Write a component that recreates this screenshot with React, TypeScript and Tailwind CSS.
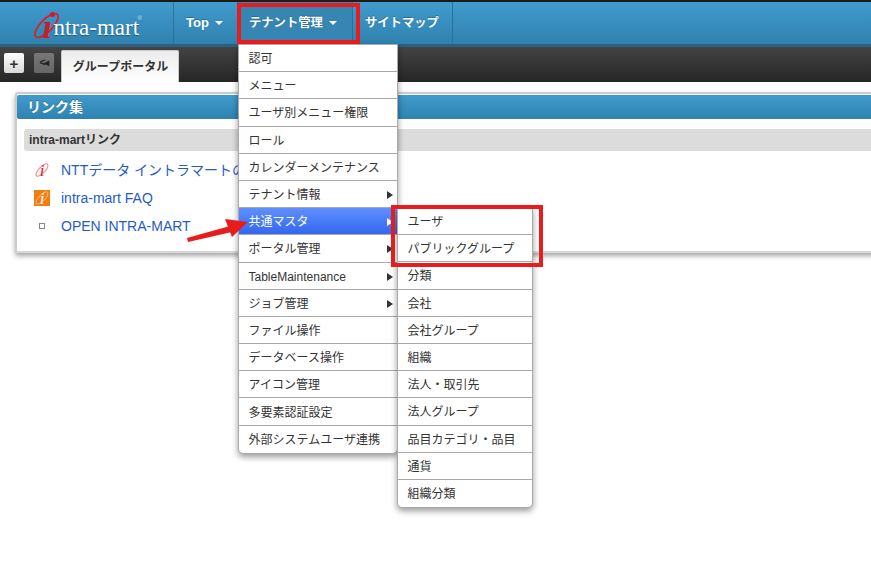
const jp = "font-['Liberation_Sans','Noto_Sans_CJK_JP',sans-serif]";

const mainMenu: { label: string; sub?: boolean; active?: boolean }[] = [
  { label: "認可" },
  { label: "メニュー" },
  { label: "ユーザ別メニュー権限" },
  { label: "ロール" },
  { label: "カレンダーメンテナンス" },
  { label: "テナント情報", sub: true },
  { label: "共通マスタ", sub: true, active: true },
  { label: "ポータル管理", sub: true },
  { label: "TableMaintenance", sub: true },
  { label: "ジョブ管理", sub: true },
  { label: "ファイル操作" },
  { label: "データベース操作" },
  { label: "アイコン管理" },
  { label: "多要素認証設定" },
  { label: "外部システムユーザ連携" },
];

const subMenu = [
  "ユーザ",
  "パブリックグループ",
  "分類",
  "会社",
  "会社グループ",
  "組織",
  "法人・取引先",
  "法人グループ",
  "品目カテゴリ・品目",
  "通貨",
  "組織分類",
];

const Caret = () => (
  <span className="ml-[6px] inline-block h-0 w-0 border-x-[4px] border-t-[4px] border-x-transparent border-t-white" />
);

const Swoosh = ({ className, color = "#d7202a", width = 2 }: { className: string; color?: string; width?: number }) => (
  <svg viewBox="0 0 36 36" className={className} fill="none">
    <ellipse cx="18" cy="18" rx="18" ry="7" transform="rotate(-46 18 18)" stroke={color} strokeWidth={width} />
  </svg>
);

const Logo = () => (
  <div className="flex w-[173px] shrink-0 items-center justify-center pr-[2px]">
    <div className="relative h-[36px] w-[112px]">
      <Swoosh className="absolute left-[1px] top-[5px] h-[31px] w-[31px]" />
      <span className="absolute left-[20px] top-[7px] h-[5px] w-[5px] rounded-full bg-[#c81e28]" />
      <span className="absolute left-[13px] top-[6px] font-['Liberation_Serif',serif] text-[34px] font-bold italic leading-[32px] text-[#c81e28]">
        ı
      </span>
      <span className="absolute left-[24px] top-[9px] font-['Liberation_Serif',serif] text-[23px] leading-[27px] text-white [text-shadow:0_1px_1px_#1c5a80]">
        ntra-mart
      </span>
      <span className="absolute left-[108px] top-[9px] text-[6px] leading-[8px] text-[#cfe3ef]">®</span>
    </div>
  </div>
);

const NavItem = ({ label, caret, className }: { label: string; caret?: boolean; className: string }) => (
  <div
    className={`flex h-full shrink-0 items-center border-l border-[#2a7099] font-bold text-white [text-shadow:0_-1px_0_#2b6d93] ${className}`}
  >
    {label}
    {caret && <Caret />}
  </div>
);

const Header = () => (
  <header className="border-t-2 border-[#1c1c1c]">
    <div className="flex h-[42px] bg-gradient-to-b from-[#409bcd] to-[#2f82af]">
      <Logo />
      <NavItem label="Top" caret className="w-[64px] pl-[12px] text-[13px]" />
      <NavItem label="テナント管理" caret className="w-[115px] bg-[#3685b2] pl-[11px] text-[12.3px]" />
      <NavItem label="サイトマップ" className="w-[100px] pl-[12px] text-[12.3px]" />
      <div className="h-full border-l border-[#2a7099]" />
    </div>
    <div className="h-[3px] bg-[#2d6080]" />
    <div className="flex h-[35px] bg-gradient-to-b from-[#444444] to-[#262626] pl-[4px] pt-[3px]">
      <button className="mt-[3px] flex h-[20px] w-[20px] items-center justify-center rounded-[2px] bg-gradient-to-b from-white to-[#d8d8d8] text-[15px] font-bold leading-none text-[#333]">
        +
      </button>
      <button className="ml-[10px] mt-[3px] flex h-[20px] w-[20px] items-center justify-center rounded-[2px] bg-gradient-to-b from-[#777777] to-[#666666] text-[10px] font-bold leading-none tracking-[-1px] text-[#222]">
        &lt;◂
      </button>
      <div className="ml-[7px] flex h-[32px] w-[118px] items-center justify-center rounded-t-[2px] border border-b-0 border-[#cccccc] bg-gradient-to-b from-[#ececec] to-white pl-[1px] text-[12px] font-bold text-[#333]">
        グループポータル
      </div>
    </div>
  </header>
);

const LinkRow = ({ icon, label }: { icon: React.ReactNode; label: string }) => (
  <div className="flex h-[28px] items-center">
    <div className="flex w-[34px] shrink-0 justify-center">{icon}</div>
    <a className="ml-[2px] whitespace-nowrap text-[14px] text-[#1f5bc9]">{label}</a>
  </div>
);

const Portlet = () => (
  <section className="-mr-[20px] ml-[15px] mt-[10px] h-[161px] rounded-[3px] border-2 border-[#cccccc] border-b-[#d8d8d8] bg-white pt-[1px] shadow-[0_3px_5px_rgba(0,0,0,0.35)]">
    <h2 className="flex h-[24px] items-center rounded-l-[2px] bg-gradient-to-b from-[#409bcd] to-[#2f82af] pl-[10px] text-[14px] font-bold text-white [text-shadow:0_-1px_0_#2b6d93]">
      リンク集
    </h2>
    <div className="pl-[7px] pt-[10px]">
      <h3 className="flex h-[22px] items-center rounded-l-[3px] bg-[#dcdcdc] pl-[5px] text-[12px] font-bold text-[#333]">
        intra-martリンク
      </h3>
      <div className="ml-[1px] pt-[5px]">
        <LinkRow
          label="NTTデータ イントラマートの"
          icon={
            <span className="relative flex h-[16px] w-[16px] items-center justify-center">
              <Swoosh className="absolute inset-0 h-[16px] w-[16px] opacity-50" width={2.4} />
              <span className="font-['Liberation_Serif',serif] text-[17px] italic leading-none text-[#d7202a]">i</span>
            </span>
          }
        />
        <LinkRow
          label="intra-mart FAQ"
          icon={
            <span className="relative flex h-[16px] w-[16px] items-center justify-center bg-[#f47d12]">
              <Swoosh className="absolute inset-0 h-[16px] w-[16px] opacity-50" color="#ffffff" width={2} />
              <span className="font-['Liberation_Serif',serif] text-[17px] italic leading-none text-white">i</span>
            </span>
          }
        />
        <LinkRow label="OPEN INTRA-MART" icon={<span className="h-[6px] w-[6px] border border-[#888888] bg-white" />} />
      </div>
    </div>
  </section>
);

const MenuRow = ({ label, sub, active, last }: { label: string; sub?: boolean; active?: boolean; last?: boolean }) => (
  <div
    className={`flex h-[27.2px] items-center justify-between pl-[9.5px] pr-[4px] pt-[2px] text-[12px] ${
      last ? "" : "border-b border-[#aaaaaa]"
    } ${active ? "bg-gradient-to-b from-[#5f8fff] to-[#3467ee] text-white" : "text-[#333]"}`}
  >
    <span className="whitespace-nowrap">{label}</span>
    {sub && (
      <span
        className={`h-0 w-0 border-y-[4px] border-l-[6px] border-y-transparent ${
          active ? "border-l-white" : "border-l-[#333]"
        }`}
      />
    )}
  </div>
);

const Menus = () => (
  <>
    <div className="absolute left-[238px] top-[44px] w-[160px] rounded-b-[5px] border border-[#aaaaaa] bg-white shadow-[0_3px_6px_rgba(0,0,0,0.4)]">
      {mainMenu.map((item, i) => (
        <MenuRow key={item.label} {...item} last={i === mainMenu.length - 1} />
      ))}
    </div>
    <div className="absolute left-[397px] top-[207px] w-[136px] rounded-b-[5px] border border-[#aaaaaa] bg-white shadow-[0_3px_6px_rgba(0,0,0,0.4)]">
      {subMenu.map((label, i) => (
        <MenuRow key={label} label={label} last={i === subMenu.length - 1} />
      ))}
    </div>
  </>
);

const Annotations = () => (
  <>
    <div className="absolute left-[237px] top-[3px] h-[41px] w-[123px] border-4 border-[#e81c1c]" />
    <div className="absolute left-[391px] top-[205px] h-[62px] w-[152px] border-4 border-[#e81c1c]" />
    <svg className="absolute left-[180px] top-[210px] h-[40px] w-[70px]" viewBox="0 0 70 40">
      <path d="M7 28 L8 32 L52 22 L50 16 Z" fill="#e81c1c" />
      <path d="M68 12 L45 9 L52 27 Z" fill="#e81c1c" />
    </svg>
  </>
);

export default function App() {
  return (
    <div className={`relative h-[578px] w-[871px] overflow-hidden bg-white ${jp}`}>
      <Header />
      <Portlet />
      <Menus />
      <Annotations />
    </div>
  );
}
